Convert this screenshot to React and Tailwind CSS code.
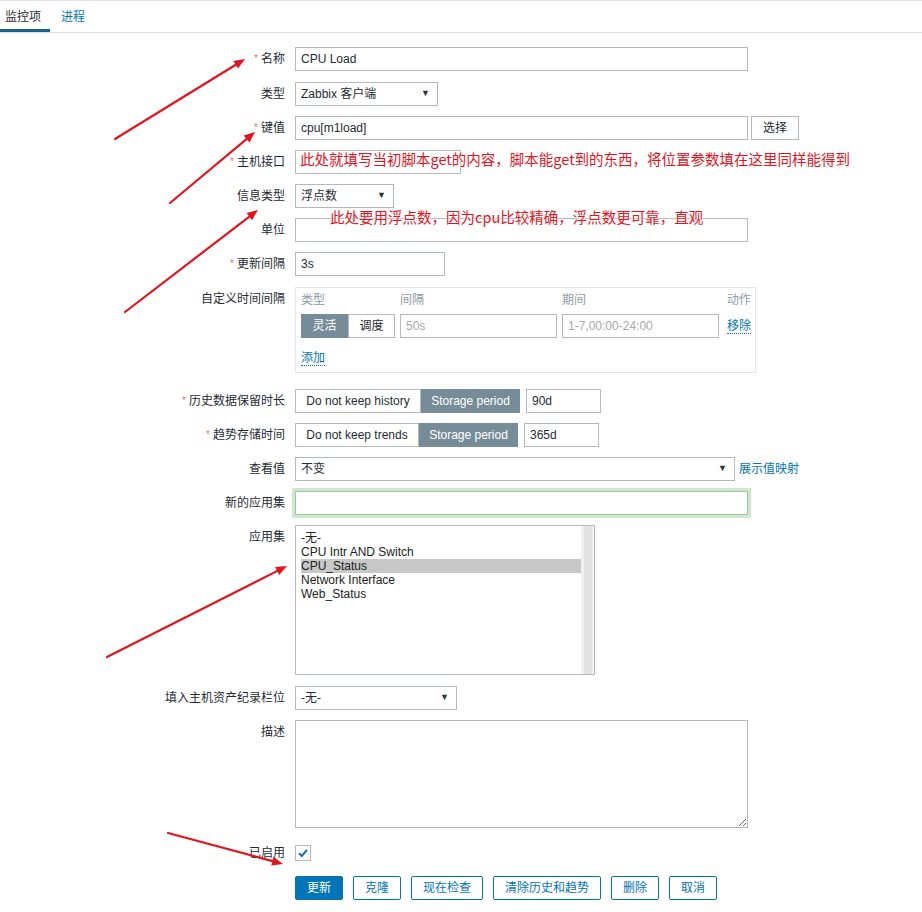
import React from 'react';

const FONT = { fontFamily: '"Liberation Sans", Arial, "Noto Sans CJK SC", sans-serif' };

function arrowHead(x1, y1, x2, y2, len = 11, half = 4.5) {
  const dx = x2 - x1;
  const dy = y2 - y1;
  const d = Math.hypot(dx, dy);
  const ux = dx / d;
  const uy = dy / d;
  const bx = x2 - ux * len;
  const by = y2 - uy * len;
  return `${x2},${y2} ${bx - uy * half},${by + ux * half} ${bx + uy * half},${by - ux * half}`;
}

const arrows = [
  [115, 139, 245, 59],
  [170, 203, 255, 132],
  [125, 312, 258, 210],
  [107, 657, 287, 566],
  [168, 833, 283, 864],
];

function Arrows() {
  return (
    <svg className="absolute left-0 top-0 pointer-events-none" width="922" height="912">
      {arrows.map(([x1, y1, x2, y2], i) => {
        const d = Math.hypot(x2 - x1, y2 - y1);
        const ex = x2 - ((x2 - x1) / d) * 8;
        const ey = y2 - ((y2 - y1) / d) * 8;
        return (
          <g key={i}>
            <line x1={x1} y1={y1} x2={ex} y2={ey} stroke="#e3141c" strokeWidth="2.2" strokeLinecap="round" />
            <polygon points={arrowHead(x1, y1, x2, y2)} fill="#e3141c" />
          </g>
        );
      })}
    </svg>
  );
}

function Row({ label, required, top = 'mt-[10px]', children }) {
  return (
    <div className={`flex ${top}`}>
      <div className="w-[295px] shrink-0 pr-[10px] text-right leading-[24px] text-[12px] text-[#1f2c33]">
        {required && <span className="text-[#e57373] text-[10px] mr-[3px] align-top">*</span>}
        {label}
      </div>
      <div className="flex-1 min-w-0 flex items-start">{children}</div>
    </div>
  );
}

function Input({ w, value, placeholder }) {
  return (
    <div className={`${w} h-[24px] border border-[#b4b9bc] bg-white px-[5px] leading-[22px] text-[12px] text-[#1f2c33]`}>
      {value}
      {placeholder && <span className="text-[#a8a8a8]">{placeholder}</span>}
    </div>
  );
}

function Select({ w, value }) {
  return (
    <div className={`${w} h-[24px] border border-[#b4b9bc] bg-white pl-[5px] pr-[7px] flex items-center justify-between text-[12px] text-[#1f2c33]`}>
      <span>{value}</span>
      <span className="text-[9px] text-[#333]">▼</span>
    </div>
  );
}

function Segment({ items, active, widths }) {
  return (
    <div className="flex h-[24px] text-[12px]">
      {items.map((t, i) => (
        <div
          key={t}
          className={`${widths[i]} flex items-center justify-center border ${
            i === active
              ? 'bg-[#768d99] border-[#768d99] text-white'
              : 'bg-white border-[#b4b9bc] text-[#1f2c33]'
          }`}
        >
          {t}
        </div>
      ))}
    </div>
  );
}

const apps = ['-无-', 'CPU Intr AND Switch', 'CPU_Status', 'Network Interface', 'Web_Status'];

const NOTE = {
  fontFamily: '"Noto Sans CJK SC", sans-serif',
  textShadow: '0 0 2px #fff, 0 0 2px #fff, 0 0 2px #fff',
};

export default function App() {
  return (
    <div className="relative w-[922px] h-[912px] bg-white overflow-hidden" style={FONT}>
      {/* Tabs */}
      <div className="border-t border-[#e4e4e4] border-b border-b-[#dcdcdc] h-[33px] flex items-end text-[12px]">
        <div className="w-[50px] h-full pl-[5px] pt-[7px] border-b-[3px] border-[#1c6290] text-[#1f2c33]">监控项</div>
        <div className="h-full pl-[11px] pt-[7px] text-[#0275b8]">进程</div>
      </div>

      {/* Form */}
      <div className="pt-[14px]">
        <Row label="名称" required top="mt-0">
          <Input w="w-[453px]" value="CPU Load" />
        </Row>
        <Row label="类型" top="mt-[11px]">
          <Select w="w-[143px]" value="Zabbix 客户端" />
        </Row>
        <Row label="键值" required>
          <Input w="w-[453px]" value="cpu[m1load]" />
          <div className="ml-[3px] w-[48px] h-[24px] border border-[#b4b9bc] bg-white flex items-center justify-center text-[12px] text-[#1f2c33]">
            选择
          </div>
        </Row>
        <Row label="主机接口" required>
          <div className="w-[166px] h-[24px] border border-[#b4b9bc] bg-white" />
        </Row>
        <Row label="信息类型">
          <Select w="w-[99px]" value="浮点数" />
        </Row>
        <Row label="单位">
          <Input w="w-[453px]" value="" />
        </Row>
        <Row label="更新间隔" required>
          <Input w="w-[150px]" value="3s" />
        </Row>
        <Row label="自定义时间间隔" top="mt-[11px]">
          <div className="w-[461px] h-[86px] border border-[#e3e6e8] pl-[5px] pr-[4px] pt-[5px] text-[12px] whitespace-nowrap">
            <div className="grid grid-cols-[94px_157px_157px_1fr] gap-x-[5px] text-[#8d9ba3] leading-[14px]">
              <div>类型</div>
              <div>间隔</div>
              <div>期间</div>
              <div className="text-right">动作</div>
            </div>
            <div className="grid grid-cols-[94px_157px_157px_1fr] gap-x-[5px] mt-[7px] items-center">
              <div className="flex h-[24px]">
                <div className="w-[47px] bg-[#768d99] text-white flex items-center justify-center">灵活</div>
                <div className="w-[47px] border border-[#b4b9bc] text-[#1f2c33] flex items-center justify-center">调度</div>
              </div>
              <Input w="w-[157px]" placeholder="50s" />
              <Input w="w-[157px]" placeholder="1-7,00:00-24:00" />
              <div className="text-right">
                <span className="text-[#0275b8] border-b border-dotted border-[#0275b8]">移除</span>
              </div>
            </div>
            <div className="mt-[11px]">
              <span className="text-[#0275b8] border-b border-dotted border-[#0275b8]">添加</span>
            </div>
          </div>
        </Row>
        <Row label="历史数据保留时长" required top="mt-[16px]">
          <Segment items={['Do not keep history', 'Storage period']} active={1} widths={['w-[126px]', 'w-[99px]']} />
          <div className="ml-[6px]">
            <Input w="w-[75px]" value="90d" />
          </div>
        </Row>
        <Row label="趋势存储时间" required>
          <Segment items={['Do not keep trends', 'Storage period']} active={1} widths={['w-[124px]', 'w-[99px]']} />
          <div className="ml-[6px]">
            <Input w="w-[75px]" value="365d" />
          </div>
        </Row>
        <Row label="查看值">
          <Select w="w-[440px]" value="不变" />
          <span className="ml-[4px] leading-[24px] text-[12px] text-[#0275b8]">展示值映射</span>
        </Row>
        <Row label="新的应用集">
          <div className="w-[453px] h-[24px] border border-[#9fc79f] bg-white shadow-[0_0_0_3px_#cfe6cf]" />
        </Row>
        <Row label="应用集">
          <div className="w-[300px] h-[150px] border border-[#b4b9bc] bg-white flex">
            <div className="flex-1 pl-[5px] pt-[5px] text-[12px] leading-[14px] text-[#222]">
              {apps.map((a) => (
                <div key={a} className={a === 'CPU_Status' ? 'bg-[#c8c8c8]' : ''}>
                  {a}
                </div>
              ))}
            </div>
            <div className="w-[13px] bg-[#f0f0f0] flex justify-center">
              <div className="w-[8px] bg-[#e2e2e2]" />
            </div>
          </div>
        </Row>
        <Row label="填入主机资产纪录栏位" top="mt-[11px]">
          <Select w="w-[162px]" value="-无-" />
        </Row>
        <Row label="描述">
          <textarea
            className="w-[453px] h-[108px] border border-[#b4b9bc] bg-white resize block outline-none"
            defaultValue=""
          />
        </Row>
        <Row label="已启用" top="mt-[13px]">
          <div className="h-[24px] flex items-center">
            <div className="w-[16px] h-[16px] border border-[#b4b9bc] bg-white flex items-center justify-center">
              <svg width="12" height="12" viewBox="0 0 12 12">
                <path d="M2 6.2 L4.8 9 L10 3" fill="none" stroke="#1f6fb0" strokeWidth="2" />
              </svg>
            </div>
          </div>
        </Row>
        <Row label="" top="mt-[11px]">
          <div className="flex gap-[10px] text-[12px]">
            <div className="h-[24px] px-[11px] bg-[#0275b8] border border-[#0275b8] text-white flex items-center rounded-[2px]">更新</div>
            {['克隆', '现在检查', '清除历史和趋势', '删除', '取消'].map((b) => (
              <div key={b} className="h-[24px] px-[11px] bg-white border border-[#0275b8] text-[#0275b8] flex items-center rounded-[2px]">
                {b}
              </div>
            ))}
          </div>
        </Row>
      </div>

      {/* Annotations */}
      <div className="absolute left-[300px] top-[150px] text-[14.5px] leading-[18px] text-[#e3141c] whitespace-nowrap" style={NOTE}>
        此处就填写当初脚本get的内容，脚本能get到的东西，将位置参数填在这里同样能得到
      </div>
      <div className="absolute left-[330px] top-[208px] text-[14.5px] leading-[18px] text-[#e3141c] whitespace-nowrap" style={NOTE}>
        此处要用浮点数，因为cpu比较精确，浮点数更可靠，直观
      </div>

      <Arrows />
    </div>
  );
}
